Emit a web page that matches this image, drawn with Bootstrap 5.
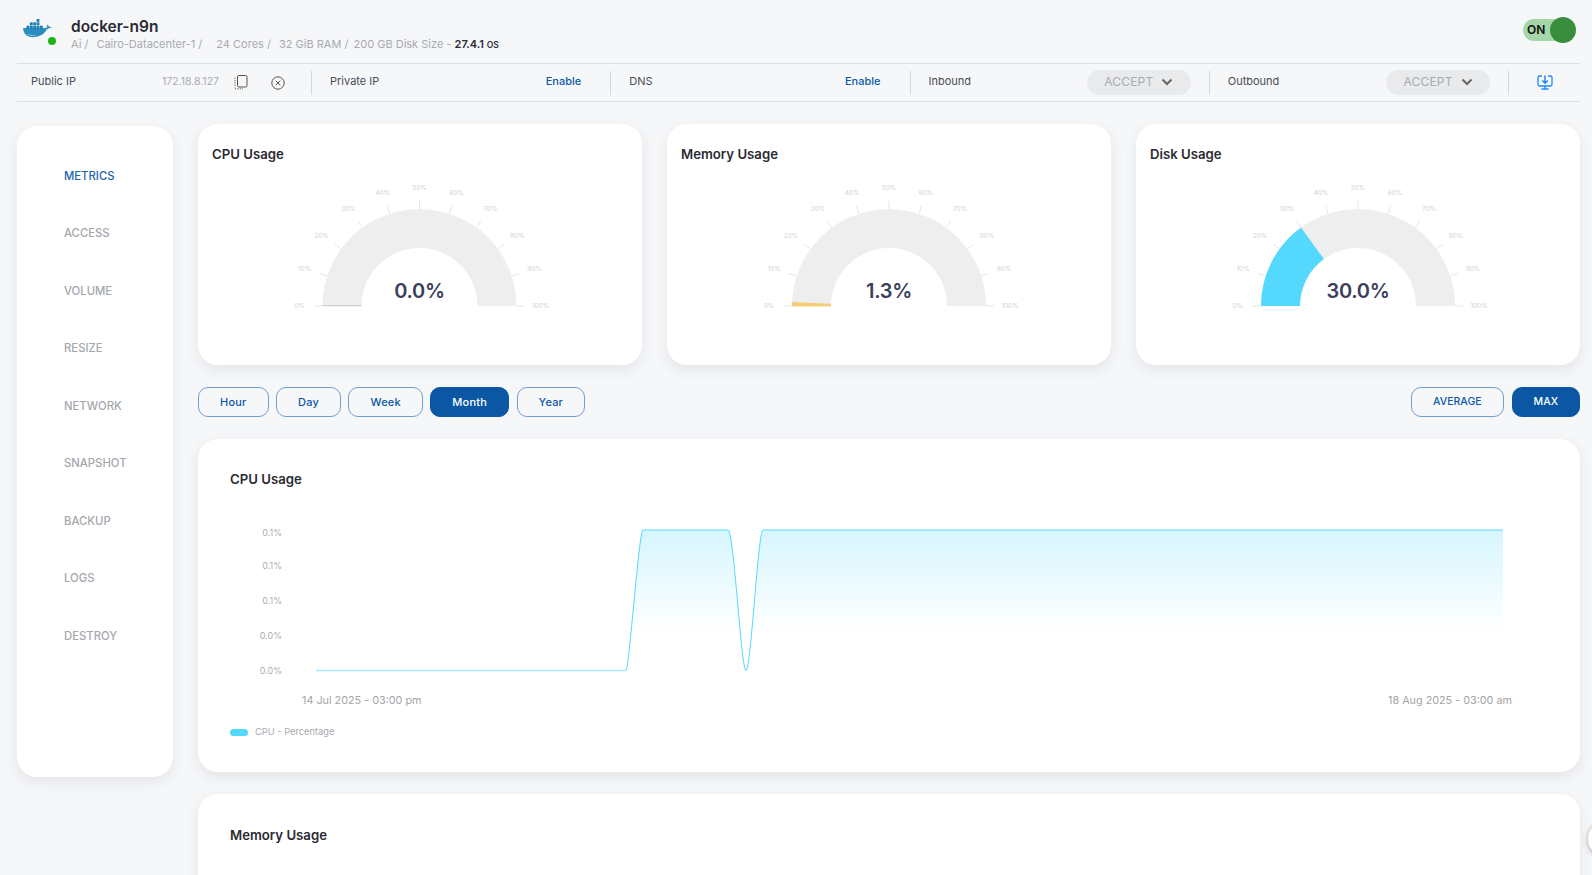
<!DOCTYPE html>
<html lang="en">
<head>
<meta charset="utf-8">
<title>docker-n9n</title>
<link href="https://cdn.jsdelivr.net/npm/bootstrap@5.3.0/dist/css/bootstrap.min.css" rel="stylesheet">
<style>
html,body{height:875px;overflow:hidden}
body{background:#f6f7f9;font-family:Inter,"Liberation Sans",sans-serif;color:#333;position:relative}
.pagewrap{padding:0 12px 0 17px}
.tophead{height:64px;border-bottom:1px solid #dcdee1}
.vmlogo{width:32px;height:28px;margin:5px 17px 0 5px;position:relative;flex:none}
.vmdot{position:absolute;width:8px;height:8px;border-radius:50%;background:#22b214;right:-1.500px;bottom:-1px}
.vmname{font-size:15.500px;font-weight:600;color:#2b2b33;line-height:20px}
.vmmeta{font-size:11px;color:#a8aab0;line-height:14px;white-space:nowrap}
.vmmeta i{font-style:normal;margin-right:4px}
.vmmeta i.gapai{margin-right:8px}
.vmmeta i.gapdc{margin-right:11px}
.vmmeta i.gapcores{margin-right:5px}
.vmmeta i.gapram{margin-right:2px}
.vmmeta i.gapdisk{margin-right:0}
.vmmeta b{font-weight:600;color:#2b2b33}
.vmmeta small{font-size:8.500px;font-weight:600}
.headtext{margin-top:6px}
.powertrack{width:49px;height:22px;border-radius:11px;background:#a5d6a7;padding-left:4px;font-size:12px;font-weight:600;color:#111;margin-top:-4px;margin-right:8px}
.powerknob{width:26px;height:26px;border-radius:50%;background:#388e3c;margin-right:-4px;flex:none}
.inforow{height:38px;border-bottom:1px solid #dcdee1;font-size:11px;color:#4a4c55}
.infocell{flex:0 0 299.250px;height:24px;border-right:1px solid #d5d7da;padding:0 29px 0 18px}
.infocell>span:first-child,.enablelink{padding-bottom:2px}
.infocell.firstcell{flex:0 0 295px;padding-left:14px;padding-right:26px}
.infocell.pillcell{padding-right:18px}
.infocell.lastcell{flex:1 1 0;border-right:0;padding:0}
.ipval{color:#a8aab0;font-size:10.500px;margin-right:14.500px;padding-bottom:2px}
.closeicon{margin-left:23.500px}
.enablelink{color:#0b58a6;font-weight:500;text-decoration:none;font-size:11px}
.acceptpill{width:104px;height:25px;border-radius:13px;background:#e9eaec;color:#a8aab0;font-size:12px;border:0;letter-spacing:.2px;padding:0 0 1px}
.mainsplit{gap:25px;margin-top:22px}
.sidepanel{width:156px;height:651px;margin-top:2px;border-radius:20px;padding:21.700px 0 0 47px;flex:none}
.sidepanel .nav-link{height:57.500px;padding:0;display:flex;align-items:center;font-size:11.300px;font-weight:500;color:#a5a7ad}
.sidepanel .nav-link.active{color:#1d64b0}
.contentcol{min-width:0}
.softcard{border:0;border-radius:20px;background:#fff;box-shadow:0 5px 14px rgba(30,40,60,.09)}
.gaugerow{gap:25px}
.gaugecard{height:241px}
.gaugetitle{font-size:13.200px;font-weight:600;color:#2b2b33;line-height:20px;padding:20px 14px 0;height:50px}
.gaugesvg{display:block;width:100%;height:180px}
.gtick{stroke:#e6e6e6;stroke-width:1}
.glabel{font-family:Inter,sans-serif;font-size:6.500px;fill:#d2d2d2;text-anchor:middle;dominant-baseline:central}
.gvalue{font-family:Inter,sans-serif;font-size:20px;font-weight:600;fill:#3a3f5c;text-anchor:middle;letter-spacing:-.3px}
.rangebar{margin-top:22px}
.rangeleft{gap:7.500px}
.rangeright{gap:8px}
.rangebtn{--bs-btn-color:#0b58a6;--bs-btn-border-color:#6f9fcf;--bs-btn-bg:transparent;--bs-btn-hover-color:#fff;--bs-btn-hover-bg:#0b57a4;--bs-btn-hover-border-color:#0b57a4;--bs-btn-active-bg:#0b57a4;--bs-btn-active-border-color:#0b57a4;--bs-btn-active-color:#fff;height:30px;border-radius:10px;font-size:11px;font-weight:500;letter-spacing:.2px;padding:0 21px;display:flex;align-items:center}
.rangebtn.capsbtn{font-size:10.500px;letter-spacing:0;padding:0 21px}
.chartcard{height:333px;margin-top:22px}
.charttitle{font-size:13.200px;font-weight:600;color:#2b2b33;line-height:20px;padding:30px 32px 0;height:61px}
.chartsvg{display:block;width:100%;height:272px}
.axistext{font-family:Inter,sans-serif;font-size:9px;fill:#adadb1}
.timetext{font-family:Inter,sans-serif;font-size:10.800px;fill:#a4a4a8}
.legendtext{font-family:Inter,sans-serif;font-size:9.300px;fill:#a8a8ad}
.memcard{height:300px;margin-top:22px}
.memcard .charttitle{padding-top:31px}
.floatcircle{position:absolute;left:1588px;top:821px;width:36px;height:36px;border-radius:50%;background:#fff;box-shadow:0 1px 5px rgba(0,0,0,.35)}
</style>
</head>
<body>
<svg width="0" height="0" class="position-absolute">
  <defs>
    <symbol id="gaugebase" overflow="visible" viewBox="-222 -132 444 180" width="444" height="180">
      <path d="M-97 0A97 97 0 0 1 97 0L58 0A58 58 0 0 0-58 0Z" fill="#eeeeee"/>
      <g class="gtick">
        <path d="M-97 0H-105M-92.200-30-99.900-32.400M-78.500-57-84.900-61.700M-57-78.500-61.700-84.900M-30-92.200-32.400-99.900M0-97V-105M30-92.200 32.400-99.900M57-78.500 61.700-84.900M78.500-57 84.900-61.700M92.200-30 99.900-32.400M97 0H105"/>
      </g>
      <g class="glabel">
        <text x="-120" y="0">0%</text><text x="-115" y="-37">10%</text><text x="-98" y="-70">20%</text><text x="-71" y="-97">30%</text><text x="-37" y="-113">40%</text><text x="0" y="-118">50%</text><text x="37" y="-113">60%</text><text x="71" y="-97">70%</text><text x="98" y="-70">80%</text><text x="115" y="-37">90%</text><text x="121" y="0">100%</text>
      </g>
    </symbol>
    <linearGradient id="cpufill" gradientUnits="userSpaceOnUse" x1="0" y1="30" x2="0" y2="132">
      <stop offset="0" stop-color="#55d8fe" stop-opacity=".24"/>
      <stop offset="1" stop-color="#55d8fe" stop-opacity="0"/>
    </linearGradient>
  </defs>
</svg>

<div class="pagewrap">
  <header class="tophead d-flex justify-content-between align-items-center">
    <div class="d-flex align-items-start">
      <div class="vmlogo">
        <svg viewBox="0 0 32 22" width="31" height="21" aria-label="Docker">
          <path d="M1 11.500h22.600c1.600 0 3-.5 3.700-1.500 1-.3 2.800-.5 3.700-1.300-.7-.5-2-.9-2.900-.6-.2-1-.8-1.800-1.500-2.400-.8.800-1 2.100-.6 3.300-.5.200-1.200.4-2 .4H1z" fill="#2b8fc4"/>
          <path d="M1.300 11.500c.4 4.300 4 7.500 9.500 7.500 6.800 0 11.800-2.700 14.700-7.500z" fill="#2a8cc0"/>
          <path d="M5 15.500c2.500 2.400 7 2.500 10.500 1.500-3.400.2-7-.1-10.500-1.500z" fill="#c7e2f0"/>
          <g fill="#1f7fb5"><rect x="4.500" y="7" width="3" height="3.500"/><rect x="8" y="7" width="3" height="3.500"/><rect x="11.500" y="7" width="3" height="3.500"/><rect x="15" y="7" width="3" height="3.500"/><rect x="18.500" y="7" width="3" height="3.500"/><rect x="8" y="3.500" width="3" height="3"/><rect x="11.500" y="3.500" width="3" height="3"/><rect x="15" y="3.500" width="3" height="3"/><rect x="15" y="0" width="3" height="3"/></g>
        </svg>
        <span class="vmdot"></span>
      </div>
      <div class="headtext">
        <div class="vmname">docker-n9n</div>
        <div class="vmmeta"><i class="gapai">Ai /</i><i class="gapdc">Cairo-Datacenter-1 /</i> <i class="gapcores">24 Cores /</i> <i class="gapram">32 GiB RAM /</i> <i class="gapdisk">200 GB Disk Size -</i> <b>27.4.1 <small>OS</small></b></div>
      </div>
    </div>
    <div class="powertrack d-flex align-items-center justify-content-between"><span>ON</span><span class="powerknob"></span></div>
  </header>

  <div class="inforow d-flex align-items-center">
    <div class="infocell firstcell d-flex align-items-center justify-content-between">
      <span>Public IP</span>
      <span class="d-flex align-items-center">
        <span class="ipval">172.18.8.127</span>
        <svg width="14" height="15" viewBox="0 0 14 15" fill="none" stroke="#555" aria-hidden="true"><rect x="3.500" y=".5" width="9.500" height="11.500" rx="1.500"/><path d="M1 2.500v10M1 13.800h8" stroke-dasharray="1.200 1.200" stroke="#666"/></svg>
        <svg class="closeicon" width="14" height="14" viewBox="0 0 14 14" fill="none" stroke="#555" aria-hidden="true"><circle cx="7" cy="7" r="6.200"/><path d="M4.700 4.700l4.600 4.600M9.300 4.700l-4.600 4.600"/></svg>
      </span>
    </div>
    <div class="infocell d-flex align-items-center justify-content-between"><span>Private IP</span><a class="enablelink" href="#">Enable</a></div>
    <div class="infocell d-flex align-items-center justify-content-between"><span>DNS</span><a class="enablelink" href="#">Enable</a></div>
    <div class="infocell pillcell d-flex align-items-center justify-content-between">
      <span>Inbound</span>
      <button class="acceptpill d-flex align-items-center justify-content-center gap-2" type="button">ACCEPT <svg width="12" height="8" viewBox="0 0 12 8" fill="none" stroke="#666" stroke-width="2" aria-hidden="true"><path d="M1.500 1.500 6 6l4.500-4.500"/></svg></button>
    </div>
    <div class="infocell pillcell d-flex align-items-center justify-content-between">
      <span>Outbound</span>
      <button class="acceptpill d-flex align-items-center justify-content-center gap-2" type="button">ACCEPT <svg width="12" height="8" viewBox="0 0 12 8" fill="none" stroke="#666" stroke-width="2" aria-hidden="true"><path d="M1.500 1.500 6 6l4.500-4.500"/></svg></button>
    </div>
    <div class="infocell lastcell d-flex align-items-center justify-content-center">
      <svg width="16" height="15" viewBox="0 0 16 15" fill="none" stroke="#1e88f5" stroke-width="1.300" aria-hidden="true"><path d="M5 1H2.500A1.500 1.500 0 0 0 1 2.500v7A1.500 1.500 0 0 0 2.500 11h11A1.500 1.500 0 0 0 15 9.500v-7A1.500 1.500 0 0 0 13.500 1H11"/><path d="M8 .5V8M5.200 5.500 8 8.300l2.800-2.800M8 11v3M4.500 14h7" stroke-width="1.500"/></svg>
    </div>
  </div>

  <div class="d-flex align-items-start mainsplit">
    <nav class="card softcard sidepanel">
      <div class="nav flex-column">
        <a class="nav-link active" href="#">METRICS</a>
        <a class="nav-link" href="#">ACCESS</a>
        <a class="nav-link" href="#">VOLUME</a>
        <a class="nav-link" href="#">RESIZE</a>
        <a class="nav-link" href="#">NETWORK</a>
        <a class="nav-link" href="#">SNAPSHOT</a>
        <a class="nav-link" href="#">BACKUP</a>
        <a class="nav-link" href="#">LOGS</a>
        <a class="nav-link" href="#">DESTROY</a>
      </div>
    </nav>

    <main class="flex-grow-1 contentcol">
      <div class="d-flex gaugerow">
        <section class="card softcard gaugecard flex-fill w-100">
          <div class="gaugetitle">CPU Usage</div>
          <svg class="gaugesvg" viewBox="-221.500 -132 444 180" role="img">
            <use href="#gaugebase" x="-222" y="-132"/>
            <rect x="-97" y="-1" width="39" height="1.300" fill="#cfcfcf"/>
            <text class="gvalue" x="0" y="-8">0.0%</text>
          </svg>
        </section>
        <section class="card softcard gaugecard flex-fill w-100">
          <div class="gaugetitle">Memory Usage</div>
          <svg class="gaugesvg" viewBox="-222 -132 444 180" role="img">
            <use href="#gaugebase" x="-222" y="-132"/>
            <path d="M-97 .5-96.900-3.960-57.950-2.370-58 .5Z" fill="#f6cd78"/>
            <text class="gvalue" x="0" y="-8">1.3%</text>
          </svg>
        </section>
        <section class="card softcard gaugecard flex-fill w-100">
          <div class="gaugetitle">Disk Usage</div>
          <svg class="gaugesvg" viewBox="-222 -132 444 180" role="img">
            <use href="#gaugebase" x="-222" y="-132"/>
            <path d="M-97 0A97 97 0 0 1-57-78.500L-34.100-46.900A58 58 0 0 0-58 0Z" fill="#55d8fe"/>
            <text class="gvalue" x="0" y="-8">30.0%</text>
          </svg>
        </section>
      </div>

      <div class="d-flex justify-content-between rangebar">
        <div class="d-flex rangeleft">
          <button class="btn rangebtn" type="button">Hour</button>
          <button class="btn rangebtn" type="button">Day</button>
          <button class="btn rangebtn" type="button">Week</button>
          <button class="btn rangebtn active" type="button">Month</button>
          <button class="btn rangebtn" type="button">Year</button>
        </div>
        <div class="d-flex rangeright">
          <button class="btn rangebtn capsbtn" type="button">AVERAGE</button>
          <button class="btn rangebtn capsbtn active" type="button">MAX</button>
        </div>
      </div>

      <section class="card softcard chartcard">
        <div class="charttitle">CPU Usage</div>
        <svg class="chartsvg" viewBox="0 0 1382 272" role="img">
          <g class="axistext" text-anchor="end">
            <text x="84" y="36">0.1%</text><text x="84" y="69">0.1%</text><text x="84" y="104">0.1%</text><text x="84" y="139">0.0%</text><text x="84" y="174">0.0%</text>
          </g>
          <path d="M428 170.500C431 170.500 441 30 445 30H530C536 30 543 170.500 548 170.500C553 170.500 560 30 565 30H1305V170.500Z" fill="url(#cpufill)"/>
          <path d="M118 170.500H428" fill="none" stroke="#a9ecff" stroke-width="1.500"/>
          <path d="M428 170.500C431 170.500 441 30 445 30H530C536 30 543 170.500 548 170.500C553 170.500 560 30 565 30H1305" fill="none" stroke="#55d8fe" stroke-width="1"/>
          <text class="timetext" x="104" y="204">14 Jul 2025 - 03:00 pm</text>
          <text class="timetext" x="1314" y="204" text-anchor="end">18 Aug 2025 - 03:00 am</text>
          <rect x="32" y="229" width="18" height="7" rx="3.500" fill="#55d8fe"/>
          <text class="legendtext" x="57" y="235">CPU - Percentage</text>
        </svg>
      </section>

      <section class="card softcard memcard">
        <div class="charttitle">Memory Usage</div>
      </section>
    </main>
  </div>
</div>
<span class="floatcircle"></span>
<script src="https://cdn.jsdelivr.net/npm/bootstrap@5.3.0/dist/js/bootstrap.bundle.min.js"></script>
</body>
</html>
